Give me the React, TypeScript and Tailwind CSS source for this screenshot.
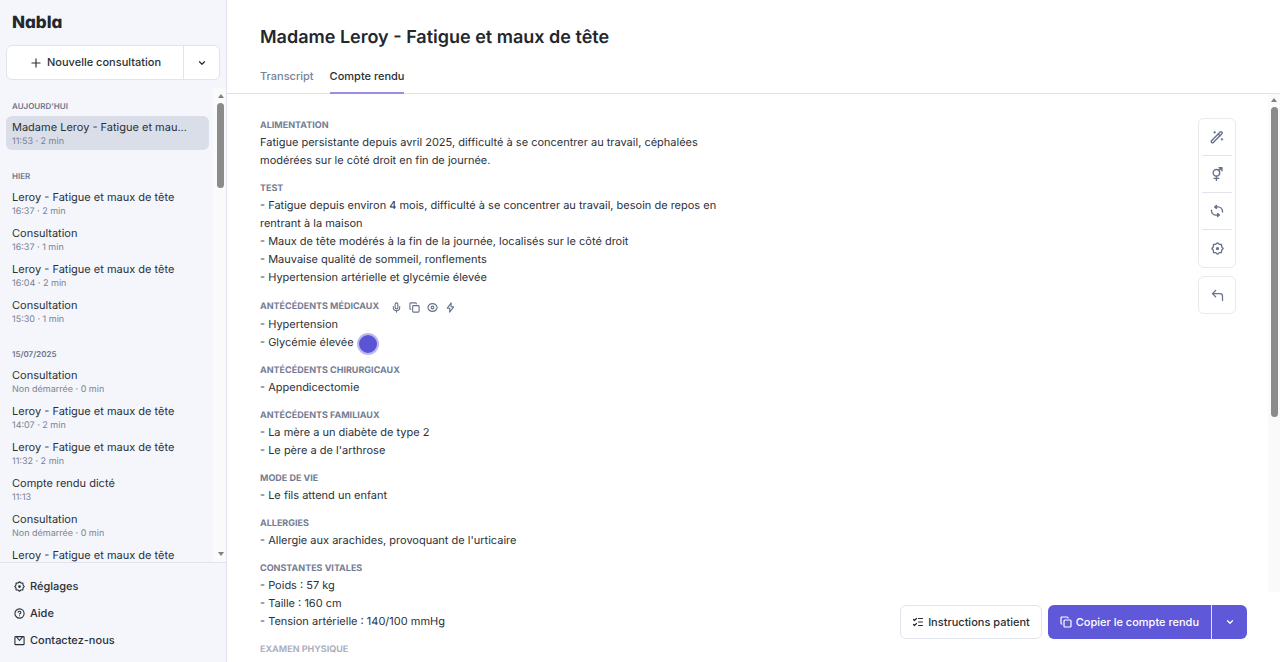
import type { ReactNode } from "react";
import { ChevronDown, CircleHelp, Copy, CornerUpLeft, ListChecks, Mic, Plus } from "lucide-react";

type IconProps = { className?: string };

function Svg({ className = "size-4", children }: { className?: string; children: ReactNode }) {
  return (
    <svg
      viewBox="0 0 24 24"
      fill="none"
      stroke="currentColor"
      strokeWidth="2.4"
      strokeLinecap="round"
      strokeLinejoin="round"
      className={className}
      aria-hidden="true"
    >
      {children}
    </svg>
  );
}

function GearIcon({ className }: IconProps) {
  return (
    <Svg className={className}>
      <path d="M8.8 4.3 L12 1.6 L15.2 4.3 L19.4 4.6 L19.7 8.8 L22.4 12 L19.7 15.2 L19.4 19.4 L15.2 19.7 L12 22.4 L8.8 19.7 L4.6 19.4 L4.3 15.2 L1.6 12 L4.3 8.8 L4.6 4.6 Z" />
      <circle cx="12" cy="12" r="1.8" fill="currentColor" />
    </Svg>
  );
}

function MailIcon({ className }: IconProps) {
  return (
    <Svg className={className}>
      <rect x="2" y="3.5" width="20" height="17.5" rx="1.5" />
      <path d="M6 4.5 L12 12 L18 4.5" />
    </Svg>
  );
}

function WandIcon({ className }: IconProps) {
  return (
    <Svg className={className}>
      <path d="M2.6 18.4 L17.4 3.6 a1.8 1.8 0 0 1 2.6 0 l0.4 0.4 a1.8 1.8 0 0 1 0 2.6 L5.6 21.4 a1.8 1.8 0 0 1-2.6 0 l-0.4-0.4 a1.8 1.8 0 0 1 0-2.6 Z" />
      <path d="M14.2 7 L17 9.8" />
      <path d="M8 1.5 L10.5 4 L8 6.5 L5.500 4 Z M20.500 13.500 L23 16 L20.500 18.500 L18 16 Z" fill="currentColor" stroke="none" />
    </Svg>
  );
}

function GenderIcon({ className }: IconProps) {
  return (
    <Svg className={className}>
      <circle cx="11" cy="10" r="5.6" />
      <path d="M11 15.6V23M7 19.5h8M15 6 L20 1.5M15.5 1.3H20.500V6.300" />
    </Svg>
  );
}

function SyncIcon({ className }: IconProps) {
  return (
    <Svg className={className}>
      <path d="M9 5h4.500a8 8 0 0 1 8 8v0.500" />
      <path d="M11 2.500 L8 5 L11 7.500 Z" fill="currentColor" />
      <path d="M2.500 10.500v0.500a8 8 0 0 0 8 8H15" />
      <path d="M13 16.500 L16 19 L13 21.500 Z" fill="currentColor" />
    </Svg>
  );
}

function EyeIcon({ className }: IconProps) {
  return (
    <Svg className={className}>
      <path d="M1.800 12C3 7 7 3.600 12 3.600s9 3.400 10.200 8.400c-1.200 5-5.200 8.400-10.200 8.400S3 17 1.800 12Z" />
      <circle cx="12" cy="12" r="3" />
    </Svg>
  );
}

function BoltIcon({ className }: IconProps) {
  return (
    <Svg className={className}>
      <path d="M13.500 2 L5 13.500 H10.500 L10 22 L19 10.500 H13.200 Z" />
    </Svg>
  );
}

type Visit = { title: string; info: string; active?: boolean };

const groups: { label: string; visits: Visit[] }[] = [
  {
    label: "AUJOURD'HUI",
    visits: [{ title: "Madame Leroy - Fatigue et mau...", info: "11:53 · 2 min", active: true }],
  },
  {
    label: "HIER",
    visits: [
      { title: "Leroy - Fatigue et maux de tête", info: "16:37 · 2 min" },
      { title: "Consultation", info: "16:37 · 1 min" },
      { title: "Leroy - Fatigue et maux de tête", info: "16:04 · 2 min" },
      { title: "Consultation", info: "15:30 · 1 min" },
    ],
  },
  {
    label: "15/07/2025",
    visits: [
      { title: "Consultation", info: "Non démarrée · 0 min" },
      { title: "Leroy - Fatigue et maux de tête", info: "14:07 · 2 min" },
      { title: "Leroy - Fatigue et maux de tête", info: "11:32 · 2 min" },
      { title: "Compte rendu dicté", info: "11:13" },
      { title: "Consultation", info: "Non démarrée · 0 min" },
      { title: "Leroy - Fatigue et maux de tête", info: "" },
    ],
  },
];

const sections: { title: string; lines: string[]; tools?: boolean }[] = [
  {
    title: "ALIMENTATION",
    lines: [
      "Fatigue persistante depuis avril 2025, difficulté à se concentrer au travail, céphalées modérées sur le côté droit en fin de journée.",
    ],
  },
  {
    title: "TEST",
    lines: [
      "- Fatigue depuis environ 4 mois, difficulté à se concentrer au travail, besoin de repos en rentrant à la maison",
      "- Maux de tête modérés à la fin de la journée, localisés sur le côté droit",
      "- Mauvaise qualité de sommeil, ronflements",
      "- Hypertension artérielle et glycémie élevée",
    ],
  },
  { title: "ANTÉCÉDENTS MÉDICAUX", lines: ["- Hypertension", "- Glycémie élevée"], tools: true },
  { title: "ANTÉCÉDENTS CHIRURGICAUX", lines: ["- Appendicectomie"] },
  { title: "ANTÉCÉDENTS FAMILIAUX", lines: ["- La mère a un diabète de type 2", "- Le père a de l'arthrose"] },
  { title: "MODE DE VIE", lines: ["- Le fils attend un enfant"] },
  { title: "ALLERGIES", lines: ["- Allergie aux arachides, provoquant de l'urticaire"] },
  {
    title: "CONSTANTES VITALES",
    lines: ["- Poids : 57 kg", "- Taille : 160 cm", "- Tension artérielle : 140/100 mmHg"],
  },
  { title: "EXAMEN PHYSIQUE", lines: [] },
];

function UpArrow() {
  return (
    <svg viewBox="0 0 6 4" className="h-1 w-1.5 shrink-0" aria-hidden="true">
      <path d="M3 0 L6 4 H0 Z" fill="#808080" />
    </svg>
  );
}

function Sidebar() {
  return (
    <aside className="flex w-[227px] shrink-0 flex-col border-r border-[#e1e4ec] bg-[#f4f6fb]">
      <div className="px-3 pt-[11px] text-[17px] leading-6 font-extrabold text-[#23272e] [font-feature-settings:'cv11']">
        Nabla
      </div>
      <div className="mx-1.5 mt-2.5 flex h-[35px] shrink-0 rounded-md border border-[#e1e4ec] bg-white text-[#2b3038]">
        <button className="flex flex-1 items-center justify-center gap-1 text-[11px] font-medium">
          <Plus className="size-3.5" strokeWidth={2} />
          Nouvelle consultation
        </button>
        <button
          aria-label="Autres options"
          className="flex w-9 items-center justify-center border-l border-[#e1e4ec]"
        >
          <ChevronDown className="size-2.5" strokeWidth={3} />
        </button>
      </div>

      <div className="mt-2 flex min-h-0 flex-1">
        <nav className="min-w-0 flex-1 overflow-hidden pt-3 pr-1 pl-1.5">
          {groups.map((group) => (
            <section key={group.label} className="mb-5">
              <h2 className="mb-1 px-1.5 text-[8px] leading-3 font-semibold text-[#69728c]">{group.label}</h2>
              <ul className="flex flex-col gap-0.5">
                {group.visits.map((visit, i) => (
                  <li key={i}>
                    <a
                      href="#"
                      className={
                        visit.active
                          ? "block h-[34px] rounded-md bg-[#d9dee8] px-1.5 pt-[3px]"
                          : "block h-[34px] rounded-md px-1.5 pt-[3px]"
                      }
                    >
                      <div className="truncate text-[11px] leading-4 text-[#2b3038]">{visit.title}</div>
                      <div className="text-[9px] leading-[14px] text-[#7a8296]">{visit.info}</div>
                    </a>
                  </li>
                ))}
              </ul>
            </section>
          ))}
        </nav>
        <div className="flex w-[13px] shrink-0 flex-col items-center bg-[#fafafb] py-1.5 pl-0.5">
          <UpArrow />
          <div className="mt-[5px] h-[85px] w-[7px] shrink-0 rounded-full bg-[#8b8b8b]" />
          <div className="mt-auto rotate-180">
            <UpArrow />
          </div>
        </div>
      </div>

      <div className="flex h-[100px] shrink-0 flex-col border-t border-[#e1e4ec] px-3.5 pt-2.5 text-[11px] font-medium text-[#2b3038]">
        <a href="#" className="flex h-[27px] items-center gap-[5px]">
          <GearIcon className="size-[11px]" />
          Réglages
        </a>
        <a href="#" className="flex h-[27px] items-center gap-[5px]">
          <CircleHelp className="size-[11px]" strokeWidth={2.4} />
          Aide
        </a>
        <a href="#" className="flex h-[27px] items-center gap-[5px]">
          <MailIcon className="size-[11px]" />
          Contactez-nous
        </a>
      </div>
    </aside>
  );
}

function SectionTools() {
  return (
    <div className="flex items-center gap-[7px] text-[#69728c]">
      <button aria-label="Dicter">
        <Mic className="size-[11px]" strokeWidth={2.4} />
      </button>
      <button aria-label="Copier la section">
        <Copy className="size-[11px]" strokeWidth={2.4} />
      </button>
      <button aria-label="Afficher">
        <EyeIcon className="size-[11px]" />
      </button>
      <button aria-label="Action rapide">
        <BoltIcon className="size-[11px]" />
      </button>
    </div>
  );
}

function Report() {
  return (
    <article className="max-w-[460px] min-w-0 flex-1">
      {sections.map((section) => (
        <section key={section.title} className="mb-[11px]">
          <div className={section.tools ? "flex h-[18px] items-center gap-3 pt-0.5" : "flex h-4 items-center pt-0.5"}>
            <h2 className="text-[9px] font-bold text-[#747c94]">{section.title}</h2>
            {section.tools && <SectionTools />}
          </div>
          {section.lines.map((line) => (
            <p key={line} className="text-[11px] leading-[18px] text-[#2b3038]">
              {line}
            </p>
          ))}
        </section>
      ))}
    </article>
  );
}

function Toolbar() {
  return (
    <div className="mt-px flex w-[38px] shrink-0 flex-col gap-2 text-[#69728c]">
      <div className="flex flex-col divide-y divide-[#e1e4ec] rounded-md border border-[#e8eaf0] px-[3px]">
        <button aria-label="Améliorer" className="flex h-[37px] items-center justify-center">
          <WandIcon className="size-[14px]" />
        </button>
        <button aria-label="Genre du patient" className="flex h-[37px] items-center justify-center">
          <GenderIcon className="size-[14px]" />
        </button>
        <button aria-label="Régénérer" className="flex h-[37px] items-center justify-center">
          <SyncIcon className="size-[14px]" />
        </button>
        <button aria-label="Paramètres" className="flex h-[37px] items-center justify-center">
          <GearIcon className="size-[13px]" />
        </button>
      </div>
      <button
        aria-label="Annuler"
        className="flex h-[38px] items-center justify-center rounded-md border border-[#e8eaf0]"
      >
        <CornerUpLeft className="size-[15px]" strokeWidth={2} />
      </button>
    </div>
  );
}

export default function App() {
  return (
    <div className="flex h-screen overflow-hidden bg-white font-['Inter',sans-serif] text-[#2b3038] [text-rendering:geometricPrecision]">
      <Sidebar />
      <main className="relative flex min-w-0 flex-1 flex-col">
        <header className="border-b border-[#dfe2ee] pl-[33px]">
          <h1 className="pt-6 text-[18px] leading-7 font-semibold text-[#23272e]">
            Madame Leroy - Fatigue et maux de tête
          </h1>
          <div role="tablist" className="mt-2 -mb-px flex h-[34px] gap-4 text-[11px] font-medium">
            <button role="tab" aria-selected="false" className="border-b-2 border-transparent text-[#7a8296]">
              Transcript
            </button>
            <button role="tab" aria-selected="true" className="border-b-2 border-[#978fe6]">
              Compte rendu
            </button>
          </div>
        </header>

        <div className="flex min-h-0 flex-1">
          <div className="flex min-w-0 flex-1 items-start justify-between gap-6 overflow-hidden pt-[23px] pr-8 pl-[33px]">
            <Report />
            <Toolbar />
          </div>
          <div className="mb-[70px] flex w-3 shrink-0 flex-col items-center bg-[#fafafb] pt-1">
            <UpArrow />
            <div className="mt-[5px] h-[310px] w-[7px] shrink-0 rounded-full bg-[#8b8b8b]" />
          </div>
        </div>

        <div className="absolute top-[333px] left-[130px] size-[22px] rounded-full border-2 border-[#bdb9ef] bg-[#5b55d6]" />

        <div className="pointer-events-none absolute inset-x-0 bottom-0 h-7 bg-linear-to-t from-white/40 from-60% to-transparent" />
        <div className="absolute right-[33px] bottom-[23px] flex h-[34px] gap-1.5 text-[11px] font-medium">
          <button className="flex items-center gap-1 rounded-md border border-[#e1e4ec] bg-white px-[11px]">
            <ListChecks className="size-3" strokeWidth={2.4} />
            Instructions patient
          </button>
          <div className="flex overflow-hidden rounded-md bg-[#5f58d8] text-white">
            <button className="flex items-center gap-1 px-3">
              <Copy className="size-3" strokeWidth={2.4} />
              Copier le compte rendu
            </button>
            <button
              aria-label="Autres formats de copie"
              className="flex w-9 items-center justify-center border-l border-[#e4e2fa]"
            >
              <ChevronDown className="size-2.5" strokeWidth={3} />
            </button>
          </div>
        </div>
      </main>
    </div>
  );
}
